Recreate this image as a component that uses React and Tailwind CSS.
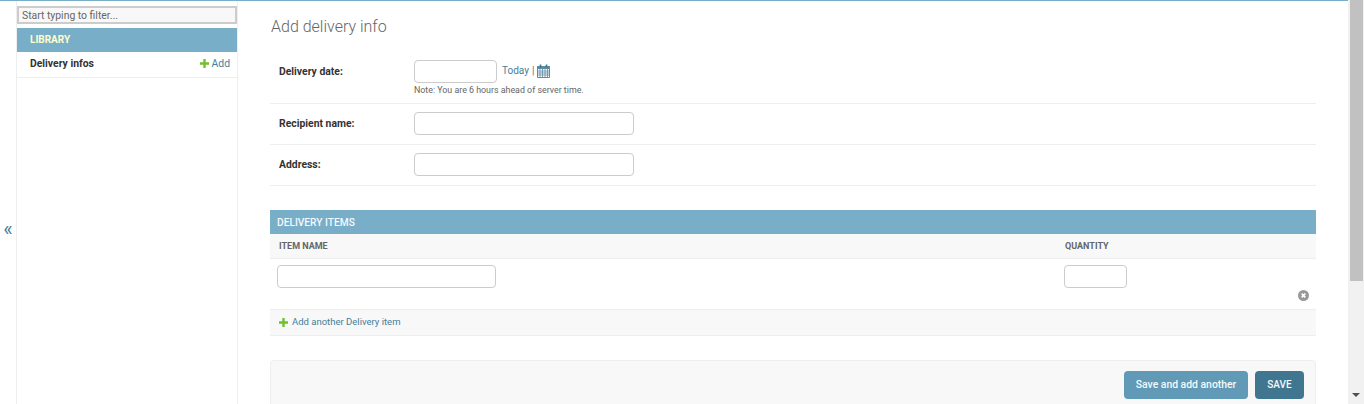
const PlusIcon = ({ size = 9 }) => (
  <svg width={size} height={size} viewBox="0 0 10 10" className="shrink-0">
    <path d="M3.7 0h2.6v3.7H10v2.6H6.3V10H3.7V6.3H0V3.7h3.7z" fill="#70bf2b" />
  </svg>
);

const CalendarIcon = () => (
  <svg width="13" height="14" viewBox="0 0 13 14" className="shrink-0">
    <path d="M.5 2.500h12v11H.5z" fill="#fff" stroke="#5d8ba3" />
    <path d="M.5 2.500h12v2H.5z" fill="#5d8ba3" stroke="#5d8ba3" />
    <path d="M3.500 0.500v3M9.500 0.500v3" stroke="#417690" strokeWidth="1.6" />
    <path d="M3 5v8M5.500 5v8M8 5v8M10.500 5v8M1 7h11M1 9h11M1 11h11" stroke="#5d8ba3" strokeWidth="0.8" />
  </svg>
);

const DeleteIcon = () => (
  <svg width="11" height="11" viewBox="0 0 12 12">
    <circle cx="6" cy="6" r="6" fill="#999" />
    <path d="M4 4l4 4M8 4l-4 4" stroke="#fff" strokeWidth="1.8" />
  </svg>
);

const inputClass = "block h-[23px] rounded border border-[#ccc] bg-white";

const FormRow = ({ label, height, labelTop, fieldTop, children }) => (
  <div className={`flex items-start border-b border-[#eee] pl-[9px] ${height}`}>
    <label className={`w-[135px] text-[10.4px] leading-[20px] font-bold text-[#333] ${labelTop}`}>{label}</label>
    <div className={fieldTop}>{children}</div>
  </div>
);

export default function App() {
  return (
    <div className="flex h-[404px] overflow-hidden bg-white text-[13px] text-[#333] [font-family:Roboto,sans-serif]">
      <div className="flex min-w-0 flex-1 flex-col border-t border-[#79aec8]">
        <div className="flex min-h-0 flex-1">
          {/* Toggle de la sidebar */}
          <div className="w-[17px] shrink-0 border-r border-[#eee] pt-[218px] text-center text-[20px] leading-[20px] text-[#447e9b]">
            «
          </div>

          {/* Sidebar */}
          <aside className="w-[221px] shrink-0 border-r border-[#eee]">
            <input
              placeholder="Start typing to filter..."
              className="mt-[5px] mb-[4px] block h-[18px] w-[220px] border-2 border-[#ccc] bg-[#f8f8f8] px-[3px] text-[10.4px] outline-none placeholder:text-[#666]"
            />
            <div className="flex h-[24px] items-center bg-[#79aec8] pb-[1px] pl-[13px] text-[10px] font-bold text-[#ffc]">
              LIBRARY
            </div>
            <div className="flex h-[26px] items-center justify-between border-b border-[#eee] pr-[7px] pb-[1px] pl-[13px] text-[10.4px]">
              <span className="font-bold text-[#333]">Delivery infos</span>
              <span className="flex items-center gap-[3px] text-[#447e9b]">
                <PlusIcon />
                Add
              </span>
            </div>
          </aside>

          {/* Contenu principal */}
          <main className="min-w-0 flex-1 px-[32px]">
            <h1 className="mt-[15px] mb-[12px] pl-[1px] text-[16px] leading-[22px] font-light text-[#666]">Add delivery info</h1>

            <FormRow label="Delivery date:" height="h-[54px]" labelTop="pt-[12px]" fieldTop="pt-[10px]">
              <div className="flex items-center gap-[5px]">
                <input className={`${inputClass} w-[83px]`} />
                <span className="flex items-center gap-[3px] pb-[2px] text-[10px] text-[#447e9b]">
                  Today <span className="text-[#666]">|</span>
                  <CalendarIcon />
                </span>
              </div>
              <p className="mt-[1px] text-[8.85px] leading-[12px] text-[#666]">Note: You are 6 hours ahead of server time.</p>
            </FormRow>
            <FormRow label="Recipient name:" height="h-[41px]" labelTop="pt-[10px]" fieldTop="pt-[8px]">
              <input className={`${inputClass} w-[220px]`} />
            </FormRow>
            <FormRow label="Address:" height="h-[41px]" labelTop="pt-[10px]" fieldTop="pt-[8px]">
              <input className={`${inputClass} w-[220px]`} />
            </FormRow>

            {/* Inline */}
            <div className="mt-[24px] flex h-[24px] items-center bg-[#79aec8] pt-[1px] pl-[7px] text-[10.2px] font-medium text-[#f4f9fb]">
              DELIVERY ITEMS
            </div>
            <div className="flex h-[25px] items-center border-b border-[#eee] bg-[#f8f8f8] pt-[1px] text-[9px] font-bold text-[#666]">
              <span className="w-[795px] pl-[9px]">ITEM NAME</span>
              <span>QUANTITY</span>
            </div>
            <div className="relative flex h-[51px] border-b border-[#eee] pt-[6px] pl-[7px]">
              <input className={`${inputClass} w-[219px]`} />
              <input className={`${inputClass} ml-[568px] w-[63px]`} />
              <span className="absolute top-[31px] right-[7px] leading-none">
                <DeleteIcon />
              </span>
            </div>
            <div className="flex h-[26px] items-center gap-[4px] border-b border-[#eee] bg-[#f8f8f8] pb-[1px] pl-[9px] text-[9.5px] text-[#447e9b]">
              <PlusIcon />
              Add another Delivery item
            </div>

            {/* Boutons */}
            <div className="mt-[24px] flex h-[60px] items-start justify-end gap-[7px] rounded border border-[#eee] bg-[#f8f8f8] pt-[10px] pr-[11px]">
              <button className="h-[28px] w-[124px] rounded bg-[#609ab6] pb-[1px] text-[10.4px] font-medium text-[#f4f9fb]">
                Save and add another
              </button>
              <button className="h-[28px] w-[49px] rounded bg-[#417690] pb-[1px] text-[10px] font-medium text-[#f4f9fb]">
                SAVE
              </button>
            </div>
          </main>
        </div>
      </div>

      {/* Barre de défilement */}
      <div className="flex w-[16px] shrink-0 flex-col items-center justify-between bg-[#f1f1f1]">
        <div className="ml-[1px] h-[281px] w-[13px] bg-[#c1c1c1]" />
        <svg width="8" height="8" viewBox="0 0 8 8" className="mb-[5px]">
          <path d="M0 2h8L4 6z" fill="#505050" />
        </svg>
      </div>
    </div>
  );
}
